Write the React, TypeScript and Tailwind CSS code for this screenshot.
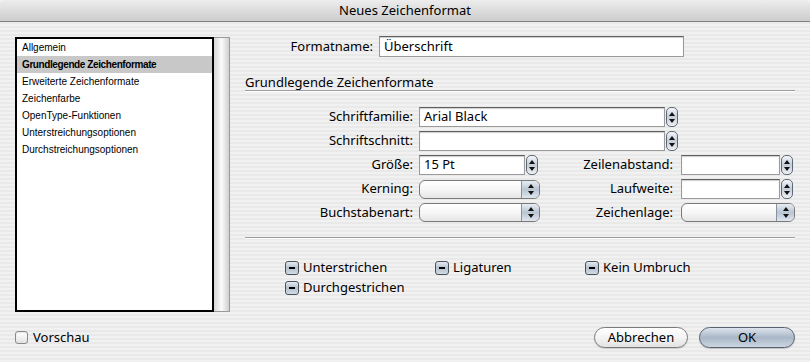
const listItems = [
  'Allgemein',
  'Grundlegende Zeichenformate',
  'Erweiterte Zeichenformate',
  'Zeichenfarbe',
  'OpenType-Funktionen',
  'Unterstreichungsoptionen',
  'Durchstreichungsoptionen',
];

function Arrows() {
  return (
    <>
      <svg width="6" height="4" viewBox="0 0 6 4">
        <path d="M3 0L6 4H0Z" fill="#111" />
      </svg>
      <svg width="6" height="4" viewBox="0 0 6 4">
        <path d="M0 0H6L3 4Z" fill="#111" />
      </svg>
    </>
  );
}

function Stepper() {
  return (
    <div className="ml-[1px] flex h-[20px] w-[12px] flex-col items-center justify-center gap-[3px] rounded-[5px] border border-[#5f6975] bg-gradient-to-b from-[#f6f8fb] via-[#c3ccd7] to-[#eef2f6]">
      <Arrows />
    </div>
  );
}

function Field({ className, value }: { className: string; value?: string }) {
  return (
    <div
      className={`flex h-[20px] items-center border border-[#9a9a9a] border-t-[#5f5f5f] bg-white pl-[4px] shadow-[inset_0_1px_1px_rgba(0,0,0,0.2)] ${className}`}
    >
      {value}
    </div>
  );
}

function Popup({ className }: { className: string }) {
  return (
    <div
      className={`flex h-[19px] overflow-hidden rounded-[6px] border border-[#7a7a7a] bg-gradient-to-b from-white via-[#f6f6f6] to-[#e6e6e6] ${className}`}
    >
      <div className="flex-1" />
      <div className="flex w-[18px] flex-col items-center justify-center gap-[3px] border-l border-[#8792a0] bg-gradient-to-b from-[#e8edf3] via-[#b9c5d3] to-[#dfe6ee]">
        <Arrows />
      </div>
    </div>
  );
}

function Mixed({ label }: { label: string }) {
  return (
    <div className="flex h-[20px] items-center">
      <div className="flex h-[14px] w-[14px] items-center justify-center rounded-[3px] border border-[#4a5058] bg-gradient-to-b from-[#e6ebf1] via-[#b3c0ce] to-[#d3dce6]">
        <div className="h-[2px] w-[6px] bg-black" />
      </div>
      <span className="ml-[4px]">{label}</span>
    </div>
  );
}

export default function App() {
  return (
    <div className="flex h-[362px] w-[810px] flex-col overflow-hidden bg-[repeating-linear-gradient(180deg,#f1f1f1_0px,#f1f1f1_2px,#e9e9e9_2px,#e9e9e9_4px)] font-['Noto_Sans',sans-serif] text-[13px] text-black">
      {/* Title bar */}
      <div className="flex h-[22px] shrink-0 items-center justify-center rounded-t-[5px] border-b border-[#808080] bg-gradient-to-b from-[#ededed] to-[#cdcdcd]">
        Neues Zeichenformat
      </div>

      <div className="flex flex-1 flex-col px-[15px]">
        <div className="flex">
          {/* Category list */}
          <div className="mt-[15px] flex h-[275px] w-[215px]">
            <div className="w-[199px] border-2 border-black bg-white font-['Liberation_Sans',sans-serif] text-[10px]">
              {listItems.map((item, i) => (
                <div
                  key={item}
                  className={
                    i === 1
                      ? 'h-[17px] bg-[#c8c8c8] pl-[5px] font-bold leading-[17px] tracking-[-0.4px]'
                      : 'h-[17px] pl-[5px] leading-[17px]'
                  }
                >
                  {item}
                </div>
              ))}
            </div>
            <div className="w-[16px] border-y border-r border-[#9a9a9a] bg-gradient-to-r from-[#d6d6d6] via-[#fbfbfb] to-[#d0d0d0]" />
          </div>

          {/* Settings */}
          <div className="ml-[15px] flex-1">
            <div className="mt-[14px] flex items-center">
              <div className="w-[128px] text-right">Formatname:</div>
              <Field className="ml-[6px] h-[21px] w-[305px]" value="Überschrift" />
            </div>

            <div className="mt-[17px] h-[17px] border-b border-[#9c9c9c] leading-[16px] shadow-[0_1px_0_#ffffff]">
              Grundlegende Zeichenformate
            </div>

            <div className="mt-[16px] flex flex-col gap-[4px]">
              <div className="flex items-center">
                <div className="w-[168px] text-right">Schriftfamilie:</div>
                <Field className="ml-[6px] w-[246px]" value="Arial Black" />
                <Stepper />
              </div>
              <div className="flex items-center">
                <div className="w-[168px] text-right">Schriftschnitt:</div>
                <Field className="ml-[6px] w-[246px]" />
                <Stepper />
              </div>
              <div className="flex items-center">
                <div className="flex w-[296px] items-center">
                  <div className="w-[168px] text-right">Größe:</div>
                  <Field className="ml-[6px] w-[106px]" value="15 Pt" />
                  <Stepper />
                </div>
                <div className="w-[132px] text-right">Zeilenabstand:</div>
                <Field className="ml-[8px] w-[99px]" />
                <Stepper />
              </div>
              <div className="flex items-center">
                <div className="flex w-[296px] items-center">
                  <div className="w-[168px] text-right">Kerning:</div>
                  <Popup className="ml-[6px] w-[121px]" />
                </div>
                <div className="w-[132px] text-right">Laufweite:</div>
                <Field className="ml-[8px] w-[99px]" />
                <Stepper />
              </div>
              <div className="flex items-center">
                <div className="flex w-[296px] items-center">
                  <div className="w-[168px] text-right">Buchstabenart:</div>
                  <Popup className="ml-[6px] w-[121px]" />
                </div>
                <div className="w-[132px] text-right">Zeichenlage:</div>
                <Popup className="ml-[8px] w-[114px]" />
              </div>
            </div>

            <div className="mt-[14px] h-px bg-[#9c9c9c] shadow-[0_1px_0_#ffffff]" />

            <div className="mt-[20px] grid grid-cols-[150px_150px_150px] pl-[40px]">
              <Mixed label="Unterstrichen" />
              <Mixed label="Ligaturen" />
              <Mixed label="Kein Umbruch" />
              <Mixed label="Durchgestrichen" />
            </div>
          </div>
        </div>

        {/* Bottom bar */}
        <div className="mt-[15px] flex h-[21px] items-center justify-between">
          <div className="flex items-center">
            <div className="h-[13px] w-[13px] rounded-[3px] border border-[#8a8a8a] bg-gradient-to-b from-white to-[#e2e2e2] shadow-[inset_0_1px_1px_rgba(0,0,0,0.1)]" />
            <span className="ml-[5px]">Vorschau</span>
          </div>
          <div className="flex items-center gap-[11px]">
            <button className="h-[21px] w-[94px] rounded-full border border-[#7a7a7a] bg-gradient-to-b from-white via-[#f4f4f4] to-[#e2e2e2] text-[13px] leading-[19px] shadow-[0_1px_1px_rgba(0,0,0,0.15)]">
              Abbrechen
            </button>
            <button className="h-[21px] w-[96px] rounded-full border border-[#56626f] bg-gradient-to-b from-[#dde4ec] via-[#a9b7c7] to-[#ccd6e1] text-[13px] leading-[19px] shadow-[0_1px_1px_rgba(0,0,0,0.2)]">
              OK
            </button>
          </div>
        </div>
      </div>
    </div>
  );
}
